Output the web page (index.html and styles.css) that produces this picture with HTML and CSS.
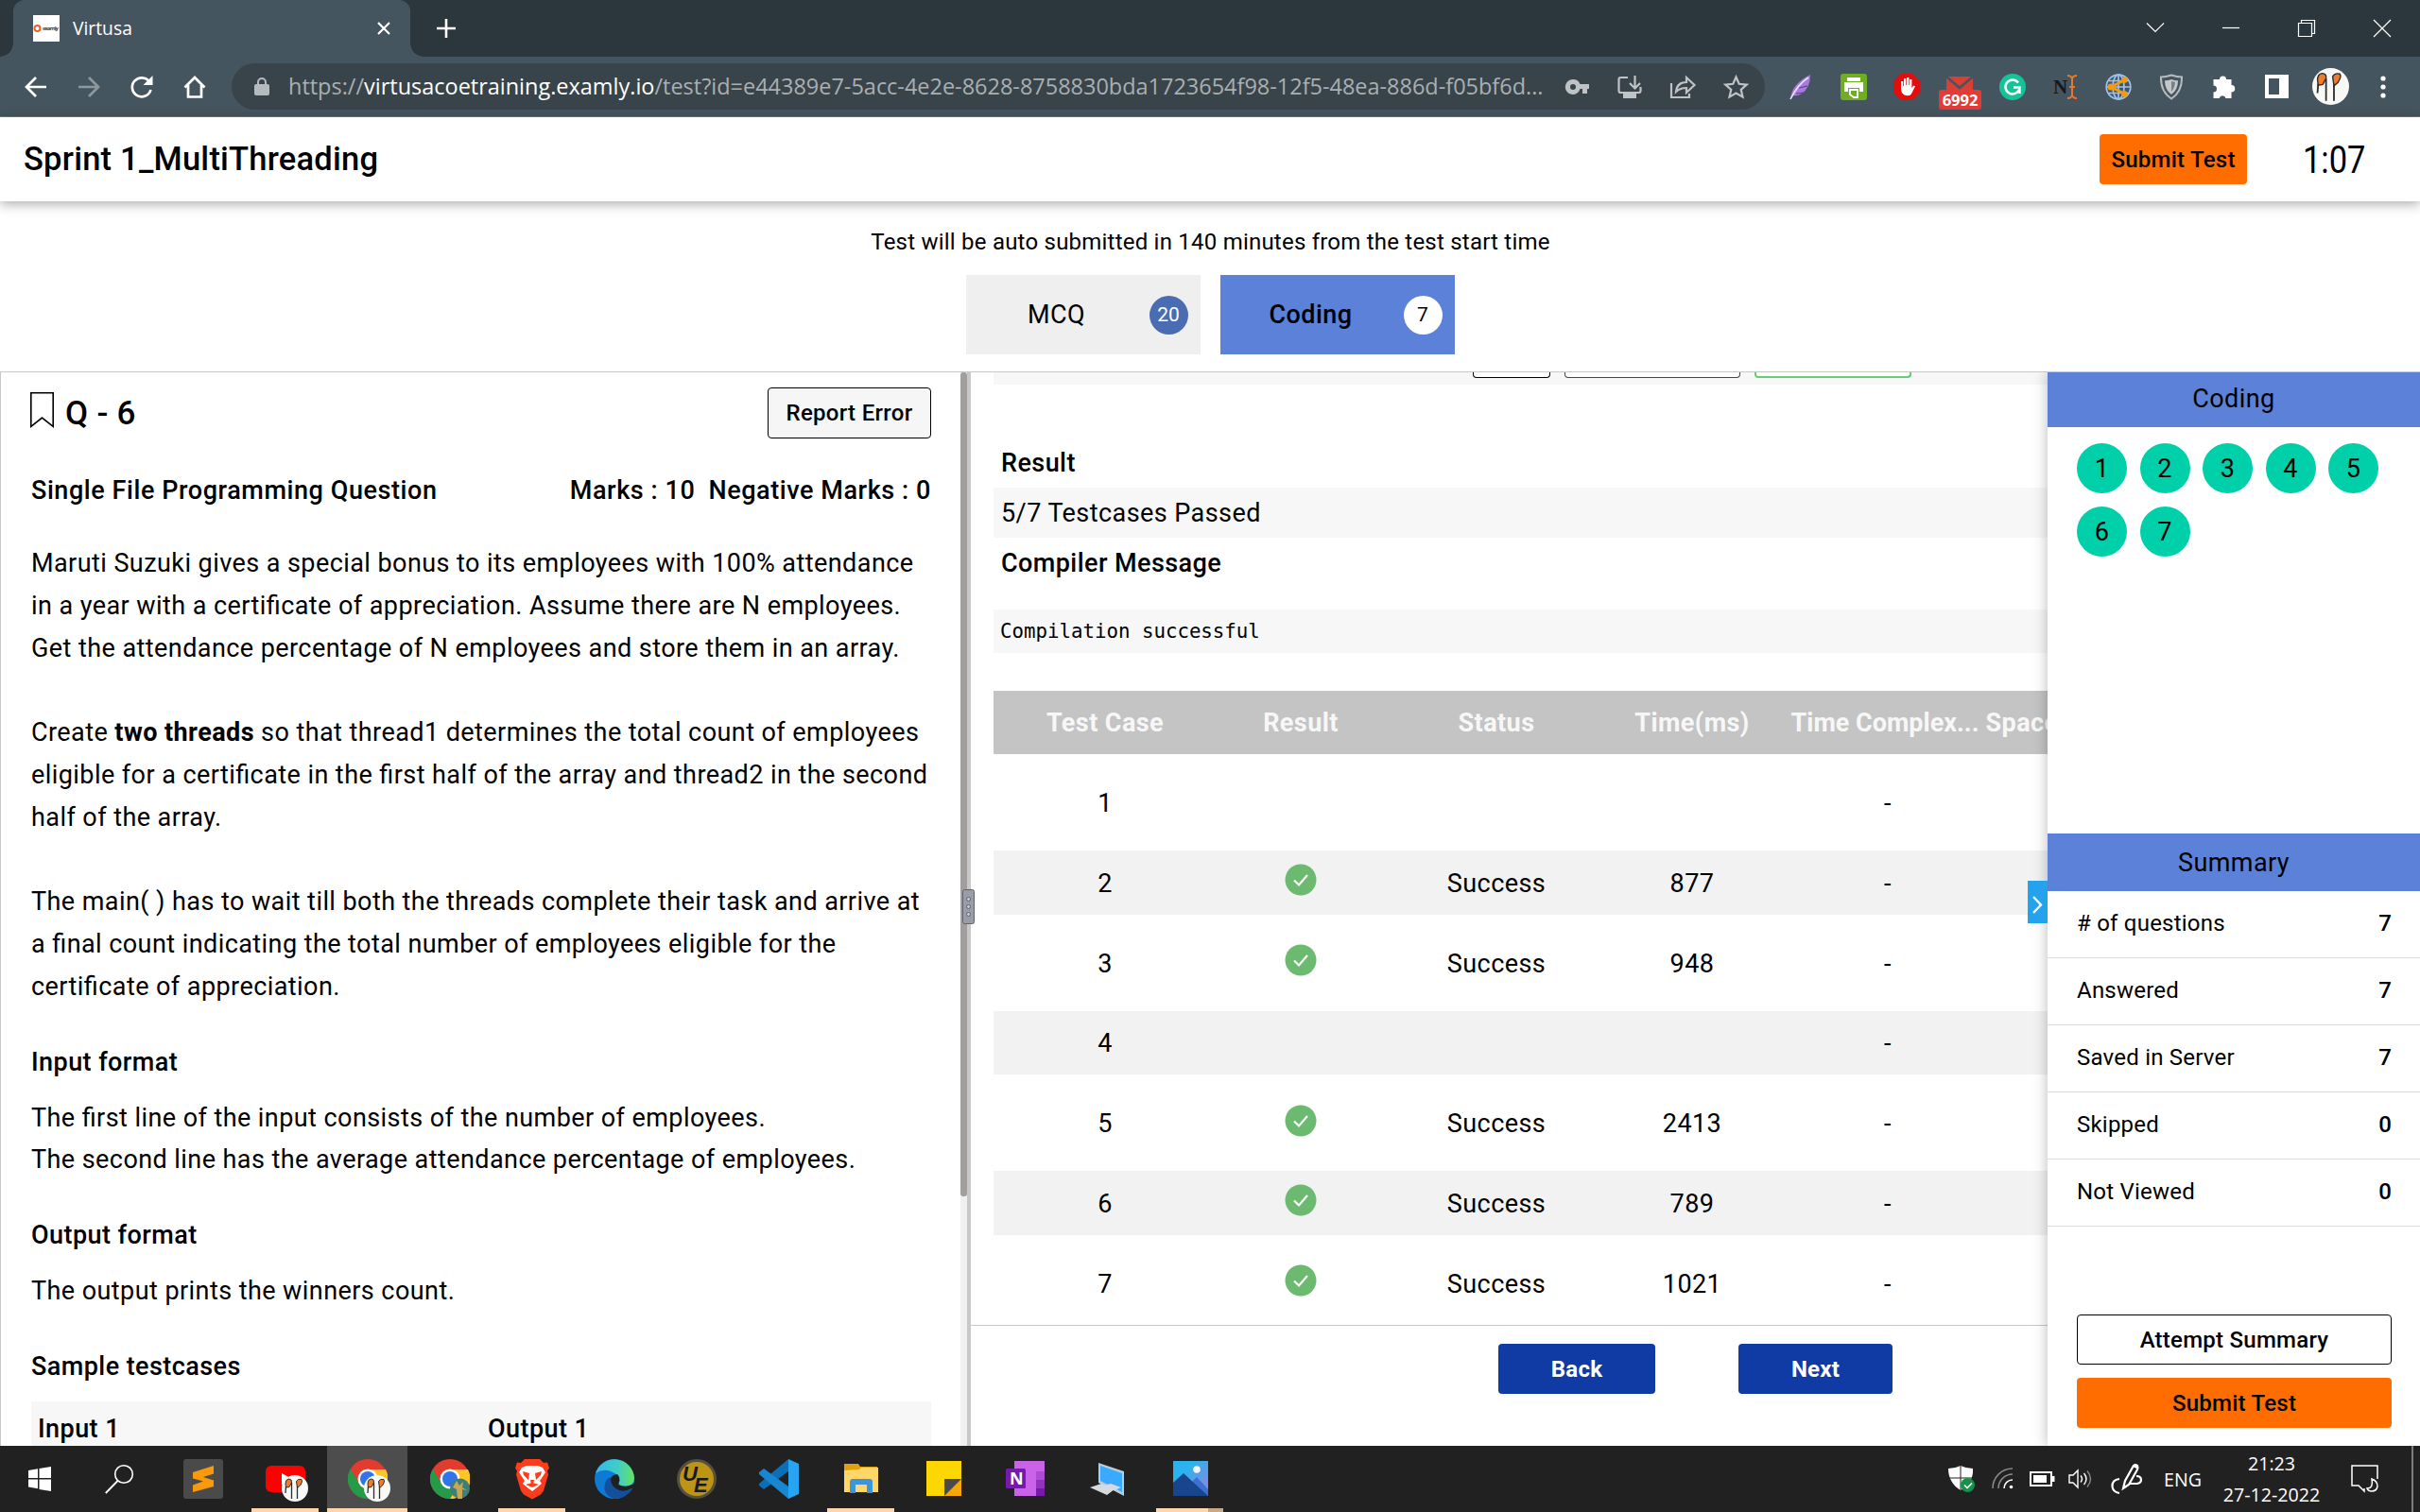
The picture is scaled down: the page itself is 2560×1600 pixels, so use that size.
FILE: index.html
```html
<!DOCTYPE html>
<html lang="en">
<head>
<meta charset="utf-8">
<title>Virtusa</title>
<link rel="stylesheet" href="styles.css">
</head>
<body>
<svg class="defs" width="0" height="0" aria-hidden="true">
  <symbol id="check" viewBox="0 0 34 34"><circle cx="17" cy="17" r="16.5" fill="#6bba70"/><path d="M10 17.5l5 5 9-10.5" fill="none" stroke="#fff" stroke-width="2.2"/></symbol>
  <symbol id="chrome" viewBox="0 0 42 42">
    <circle cx="21" cy="21" r="21" fill="#e33b2e"/>
    <path d="M21 11H40A21 21 0 0 1 21 42L30 26Z" fill="#fcc528"/>
    <path d="M2.8 10.5A21 21 0 0 0 21 42L30 26 12 26Z" fill="#259a48"/>
    <circle cx="21" cy="21" r="10.5" fill="#fff"/><circle cx="21" cy="21" r="8" fill="#2f74e8"/>
  </symbol>
  <symbol id="face" viewBox="0 0 28 28">
    <circle cx="14" cy="14" r="14" fill="#f8f8f6"/>
    <path d="M4 9Q4 4.500 7.500 4Q11 4 10.500 8L8 12.500 4.500 13ZM15.500 6.500Q17 3.500 21 4.500Q22.500 6.500 19.500 11L16.500 13.500Z" fill="#ee7c28" stroke="#2c2c2c" stroke-width="1"/>
    <path d="M4.500 12L4 19M10.500 8l0 17M16.500 12l0 13" fill="none" stroke="#2c2c2c" stroke-width="1.300"/>
  </symbol>
</svg>

<div class="screen">
  <div class="tabstrip">
    <div class="tab">
      <svg class="favicon" viewBox="0 0 28 28"><rect width="28" height="28" fill="#fff"/><circle cx="4.500" cy="14" r="3" fill="none" stroke="#e8622a" stroke-width="2"/><text x="10" y="16" font-size="6" font-weight="700" fill="#444" textLength="17">examly</text></svg>
      <span class="tab-title">Virtusa</span>
      <svg class="tab-close" viewBox="0 0 16 16"><path d="M2 2l12 12M14 2L2 14"/></svg>
    </div>
    <svg class="new-tab" viewBox="0 0 22 22"><path d="M11 1v20M1 11h20"/></svg>
    <div class="win-controls">
      <span><svg width="18" height="18" viewBox="0 0 18 18"><path d="M0 3.500l9 9 9-9"/></svg></span>
      <span><svg width="18" height="18" viewBox="0 0 18 18"><path d="M0 8.500h18"/></svg></span>
      <span><svg width="18" height="18" viewBox="0 0 18 18"><path d="M.5 3.500h14v14H.5zM3.500 3V.5h14v14h-3"/></svg></span>
      <span><svg width="18" height="18" viewBox="0 0 18 18"><path d="M0 0l18 18M18 0L0 18"/></svg></span>
    </div>
  </div>

  <div class="toolbar">
    <div class="nav">
      <span><svg width="24" height="24" viewBox="0 0 24 24"><path d="M23 12H3M12 2L2 12l10 10"/></svg></span>
      <span class="dim"><svg width="24" height="24" viewBox="0 0 24 24"><path d="M1 12h20M12 2l10 10-10 10"/></svg></span>
      <span><svg width="26" height="26" viewBox="0 0 26 26"><path d="M21 7.500A10 10 0 1 0 22.500 16"/><path d="M24.500 1v10h-10z" fill="#fff" stroke="none"/></svg></span>
      <span><svg width="24" height="24" viewBox="0 0 24 24"><path d="M1.500 12.500L12 2l10.500 10.500M5 10v12.500h14V10"/></svg></span>
    </div>
    <div class="omnibox">
      <svg class="lock" viewBox="0 0 16 20"><rect x="0" y="7" width="16" height="12" rx="2" fill="#b4babd"/><path d="M4 8V5a4 4 0 0 1 8 0v3" fill="none" stroke="#b4babd" stroke-width="2"/></svg>
      <span class="url">https://<b>virtusacoetraining.examly.io</b>/test?id=e44389e7-5acc-4e2e-8628-8758830bda1723654f98-12f5-48ea-886d-f05bf6d...</span>
      <div class="omni-icons">
        <span><svg class="key" width="25" height="16" viewBox="0 0 25 16"><path fill="#bfc3c5" stroke="none" fill-rule="evenodd" d="M8 0a8 8 0 0 1 7.500 5H25v5h-2v5h-5v-5h-2.500A8 8 0 1 1 8 0zm0 5a3 3 0 1 0 0 6 3 3 0 0 0 0-6z"/></svg></span>
        <span><svg width="26" height="26" viewBox="0 0 26 26"><path d="M11 3H3.500Q1.500 3 1.500 5v12q0 2 2 2h19q2 0 2-2v-4M18.500 1v13M13 9l5.500 5.500L24 9"/><path d="M6 20h14v5H6z" fill="#bfc3c5" stroke="none"/></svg></span>
        <span><svg width="28" height="26" viewBox="0 0 28 26"><path d="M2 9v15h19v-4M7 18q1-10 11-10V3l8.500 8-8.500 8v-5q-7 0-11 4z"/></svg></span>
        <span><svg width="27" height="26" viewBox="0 0 27 26"><path d="M13.500 2.500l3.200 7.300 8 .8-6 5.200 1.800 7.800-7-4.100-7 4.100 1.800-7.800-6-5.200 8-.8z"/></svg></span>
      </div>
    </div>
    <div class="extensions">
      <span><svg width="26" height="30" viewBox="0 0 26 30"><path d="M2 28Q3 12 23 2q0 14-9 20-5 3-9 2z" fill="#a67bdd"/><path d="M2 28Q10 12 21 5" fill="none" stroke="#efe2ff" stroke-width="1.500"/><path d="M8 22l8-1M11 16l9-2" stroke="#5e379b" stroke-width="1"/></svg></span>
      <span><svg width="28" height="28" viewBox="0 0 28 28"><rect width="28" height="28" rx="3" fill="#6fae22"/><path d="M7 4h14v4H7zM4 9h20v10h-4v-4H8v4H4z" fill="#fff"/><path d="M10 17h8v8h-4l-4-3z" fill="#6fae22" stroke="#fff" stroke-width="1.800"/></svg></span>
      <span><svg width="28" height="28" viewBox="0 0 28 28"><path d="M8 0h12l8 8v12l-8 8H8l-8-8V8z" fill="#e40d0d"/><path d="M8 15V8h2.200v5h.8V5h2.300v7h.8V4h2.300v8h.8V6h2.200v9l2-2.500 1.600.8-4 8q-1 2-4 2-7 0-7-8z" fill="#fff"/></svg></span>
      <span class="mail"><svg width="28" height="28" viewBox="0 0 28 28"><path d="M0 3h28v22H0z" fill="#d93f35"/><path d="M0 3l14 12L28 3" fill="none" stroke="#45555f" stroke-width="2.500"/></svg><em>6992</em></span>
      <span><svg width="28" height="28" viewBox="0 0 28 28"><circle cx="14" cy="14" r="14" fill="#15c39a"/><path d="M20 9.500A7.500 7.500 0 1 0 21.500 14.500H15M21.500 14v7" fill="none" stroke="#fff" stroke-width="2.400"/></svg></span>
      <span><svg width="26" height="28" viewBox="0 0 26 28"><text x="0" y="20.500" font-family="Liberation Serif, serif" font-size="21" font-weight="700" fill="#11181c">N</text><path d="M15 2q4 0 5 3 1-3 5-3M20 4v20M15 26q4 0 5-3 1 3 5 3M17 14h6" fill="none" stroke="#e8772a" stroke-width="2"/></svg></span>
      <span><svg width="28" height="28" viewBox="0 0 28 28"><g fill="none" stroke="#9dc2f0" stroke-width="1.700"><circle cx="14" cy="14" r="12.800"/><ellipse cx="14" cy="14" rx="6" ry="12.800"/><path d="M1 14h26M14 1v26M3.500 7.500h21M3.500 20.500h21"/></g><path d="M20 7L6 14l14 7" fill="none" stroke="#f59a0c" stroke-width="3"/><circle cx="20.500" cy="6.500" r="3.200" fill="#f59a0c"/><circle cx="6" cy="14" r="3.600" fill="#f59a0c"/><circle cx="20.500" cy="21.500" r="3.200" fill="#f59a0c"/></svg></span>
      <span><svg width="26" height="28" viewBox="0 0 26 28"><path d="M13 1.500q6 2 11 2Q24.500 19 13 26.500 1.500 19 2 3.500q5 0 11-2z" fill="none" stroke="#b9bcbe" stroke-width="2"/><path d="M13 6q3.500 1.200 7 1.200Q20 17 13 22 6 17 6 7.200 9.500 7.200 13 6z" fill="#c4c6c8"/><path d="M13 8v11q3.500-4 4-10z" fill="#75828a"/></svg></span>
      <span><svg width="26" height="26" viewBox="0 0 26 26"><path d="M8 5a3.500 3.500 0 0 1 7 0h5.500v6a3.500 3.500 0 0 1 0 7.500V25h-6a3.500 3.500 0 0 0-6.800 0H1.500v-6.500a3.500 3.500 0 0 0 0-7V5z" fill="#fff"/></svg></span>
      <span><svg width="26" height="26" viewBox="0 0 26 26"><path d="M0 0h25v25H0zM4 4v17h11V4z" fill="#fff" fill-rule="evenodd"/></svg></span>
      <span><svg width="39" height="39" viewBox="0 0 39 39"><use href="#face" width="39" height="39"/></svg></span>
      <span><svg width="6" height="24" viewBox="0 0 6 24"><circle cx="3" cy="3" r="2.600" fill="#fff"/><circle cx="3" cy="12" r="2.600" fill="#fff"/><circle cx="3" cy="21" r="2.600" fill="#fff"/></svg></span>
    </div>
  </div>

  <header class="exam-header">
    <h1>Sprint 1_MultiThreading</h1>
    <button class="btn orange">Submit Test</button>
    <span class="timer">1:07</span>
  </header>

  <section class="sections">
    <p>Test will be auto submitted in 140 minutes from the test start time</p>
    <div class="section-tabs">
      <div class="section-tab"><span>MCQ</span><i>20</i></div>
      <div class="section-tab active"><span>Coding</span><i>7</i></div>
    </div>
  </section>

  <main class="exam">
    <section class="question">
      <div class="question-scroll">
        <div class="q-head">
          <svg class="bookmark" viewBox="0 0 25 38"><path d="M.8.8h23.400v35.500L12.500 27 .8 36.300z"/></svg>
          <h2>Q - 6</h2>
          <button class="report">Report Error</button>
        </div>
        <div class="q-meta"><span>Single File Programming Question</span><span>Marks : 10</span><span>Negative Marks : 0</span></div>
        <div class="q-body">
          <p>Maruti Suzuki gives a special bonus to its employees with 100% attendance<br>in a year with a certificate of appreciation. Assume there are N employees.<br>Get the attendance percentage of N employees and store them in an array.</p>
          <p>Create <b>two threads</b> so that thread1 determines the total count of employees<br>eligible for a certificate in the first half of the array and thread2 in the second<br>half of the array.</p>
          <p>The main( ) has to wait till both the threads complete their task and arrive at<br>a final count indicating the total number of employees eligible for the<br>certificate of appreciation.</p>
        </div>
        <h3>Input format</h3>
        <p>The first line of the input consists of the number of employees.<br>The second line has the average attendance percentage of employees.</p>
        <h3>Output format</h3>
        <p>The output prints the winners count.</p>
        <h3>Sample testcases</h3>
        <div class="sample"><span>Input 1</span><span>Output 1</span></div>
      </div>
      <div class="scroll-track"><div class="scroll-thumb"></div></div>
    </section>
    <div class="splitter"><svg class="grip" viewBox="0 0 13 37"><rect x=".5" y=".5" width="12" height="36" rx="2" fill="#9a9da6" stroke="#5c6370"/><g fill="#c9ccd3" stroke="#5c6370" stroke-width="1"><circle cx="6.500" cy="10.500" r="2"/><circle cx="6.500" cy="18.500" r="2"/><circle cx="6.500" cy="26.500" r="2"/></g></svg></div>

    <section class="results">
      <div class="results-scroll">
        <div class="actions"><span></span><span></span><span></span></div>
        <h4>Result</h4>
        <div class="value">5/7 Testcases Passed</div>
        <h4>Compiler Message</h4>
        <pre>Compilation successful</pre>
        <div class="grid">
          <div class="row head"><span>Test Case</span><span>Result</span><span>Status</span><span>Time(ms)</span><span class="tight">Time Complex...</span><span class="clip">Space</span></div>
          <div class="row"><span>1</span><span></span><span></span><span></span><span>-</span></div>
          <div class="row"><span>2</span><span><svg><use href="#check"/></svg></span><span>Success</span><span>877</span><span>-</span></div>
          <div class="row"><span>3</span><span><svg><use href="#check"/></svg></span><span>Success</span><span>948</span><span>-</span></div>
          <div class="row"><span>4</span><span></span><span></span><span></span><span>-</span></div>
          <div class="row"><span>5</span><span><svg><use href="#check"/></svg></span><span>Success</span><span>2413</span><span>-</span></div>
          <div class="row"><span>6</span><span><svg><use href="#check"/></svg></span><span>Success</span><span>789</span><span>-</span></div>
          <div class="row"><span>7</span><span><svg><use href="#check"/></svg></span><span>Success</span><span>1021</span><span>-</span></div>
        </div>
      </div>
      <div class="pager"><button class="btn blue">Back</button><button class="btn blue next">Next</button></div>
    </section>

    <aside class="side">
      <svg class="collapse" viewBox="0 0 21 45"><path d="M0 0h21v45H0z" fill="#24a2ec"/><path d="M6 17l8 8.500L6 34" fill="none" stroke="#fff" stroke-width="2.400"/></svg>
      <h5>Coding</h5>
      <div class="numbers"><i>1</i><i>2</i><i>3</i><i>4</i><i>5</i><i>6</i><i>7</i></div>
      <h5 class="summary-head">Summary</h5>
      <dl>
        <div><dt># of questions</dt><dd>7</dd></div>
        <div><dt>Answered</dt><dd>7</dd></div>
        <div><dt>Saved in Server</dt><dd>7</dd></div>
        <div><dt>Skipped</dt><dd>0</dd></div>
        <div><dt>Not Viewed</dt><dd>0</dd></div>
      </dl>
      <div class="side-actions"><button class="btn outline">Attempt Summary</button><button class="btn orange">Submit Test</button></div>
    </aside>
  </main>

  <footer class="taskbar">
    <div class="task start"><svg width="24" height="26" viewBox="0 0 24 26"><path d="M0 4l10-1.700V12H0zM11.500 2L24 0v12H11.500zM0 13.500h10v9.700L0 21.500zM11.500 13.500H24V26l-12.500-2z" fill="#fff"/></svg></div>
    <div class="task search"><svg width="30" height="31" viewBox="0 0 30 31"><circle cx="20" cy="10" r="9.300" fill="none" stroke="#fff" stroke-width="1.600"/><path d="M13.500 17L.8 30" stroke="#fff" stroke-width="1.800"/></svg></div>
    <div class="task"><svg viewBox="0 0 42 42"><rect width="42" height="42" rx="3" fill="#4a4a4a"/><path d="M10 14l22-7v8.500L21 19l11 3.500v6.500L10 35v-7.500l11-4-11-3z" fill="#f99a0e"/></svg></div>
    <div class="task open"><svg viewBox="0 0 42 42"><rect y="7" width="42" height="28" rx="6" fill="#f00"/><path d="M17 15l11 6-11 6z" fill="#fff"/><use href="#face" x="17" y="17" width="28" height="28"/></svg></div>
    <div class="task active"><svg viewBox="0 0 42 42"><use href="#chrome" width="42" height="42"/><use href="#face" x="17" y="17" width="28" height="28"/></svg></div>
    <div class="task"><svg viewBox="0 0 42 42"><use href="#chrome" width="42" height="42"/><circle cx="31.500" cy="31" r="10.500" fill="#3d7f78"/><path d="M28 23l3 5 4-4-1 6 5 3-5-1v10h-5l-1-10-4-2z" fill="#c9a653"/></svg></div>
    <div class="task open"><svg viewBox="0 0 42 42"><path d="M13 0h16l4 4 4-.5 2 6-2 3 1 4-5 17-3 4-9 5-9-5-3-4-5-17 1-4-2-3 2-6 4 .5z" fill="#fb3d1c"/><path d="M15 7h12l5 2 3 5-6 9 2 3-6 5-4 3-4-3-6-5 2-3-6-9 3-5z" fill="#fff"/><path d="M11 13l7 2-1 7-5-5zM31 13l-7 2 1 7 5-5zM19 22h4l-1 5h-2zM14 27l7-2 7 2-7 3z" fill="#fb3d1c"/></svg></div>
    <div class="task"><svg viewBox="0 0 42 42"><defs><linearGradient id="e1" x1="0" x2="1"><stop offset="0" stop-color="#35b6f0"/><stop offset=".6" stop-color="#3fd0c0"/><stop offset="1" stop-color="#67e35a"/></linearGradient></defs><circle cx="21" cy="21" r="21" fill="#0e7ad3"/><path d="M1 15A21 21 0 0 1 42 20q0 8-9 8.500-7 0-7.500-3Q28 20 23 16 11 8 1 15z" fill="url(#e1)"/><path d="M17 19q0 11 10 14 7 2 14-3Q34 42 21 42 8 38 11 26q1-5 6-7z" fill="#12509c"/><path d="M24 16q-7 1-7 6 1 8 9 11 7 2 13-2l3-1v-4q-7 4-13 2.500-5-1-3.500-3Q28 20 24 16z" fill="#202020"/></svg></div>
    <div class="task"><svg viewBox="0 0 42 42"><circle cx="21" cy="21" r="19.500" fill="#bd9413" stroke="#55503f" stroke-width="3"/><text x="6" y="23" font-family="Liberation Sans, sans-serif" font-size="22" font-weight="700" font-style="italic" fill="#191919">U</text><text x="18" y="35" font-family="Liberation Sans, sans-serif" font-size="22" font-weight="700" font-style="italic" fill="#191919">E</text></svg></div>
    <div class="task"><svg viewBox="0 0 42 42"><path d="M31 0v13L5 32l-5-4v-2z" fill="#0b6fb5"/><path d="M31 42V29L5 10l-5 4v2z" fill="#1587d3"/><path d="M31 0l11 5v32l-11 5z" fill="#27a5f3"/></svg></div>
    <div class="task open"><svg viewBox="0 0 42 42"><path d="M3 5h15l2 3h18v8H3z" fill="#e2a00f"/><path d="M3 12l16-1 2-2h18v26H3z" fill="#ffd768"/><path d="M9 36V24q0-3 3-3h18q3 0 3 3v12h-6v-9H15v9z" fill="#3b94dc"/></svg></div>
    <div class="task"><svg viewBox="0 0 42 42"><path d="M3 2h37v37H3z" fill="#fdd703"/><path d="M22 21h18v18H22z" fill="#f5a808"/><path d="M22 21h18L22 39z" fill="#4a4a4a"/></svg></div>
    <div class="task"><svg viewBox="0 0 42 42"><path d="M9 2h32v37H9z" fill="#ca63e8"/><path d="M32 13h9v9h-9z" fill="#ae4bd5"/><path d="M32 22h9v9h-9z" fill="#9332bf"/><path d="M32 31h9v8h-9z" fill="#7719aa"/><rect y="10" width="21" height="21" rx="1.500" fill="#7719aa"/><text x="4" y="27" font-family="Open Sans, sans-serif" font-size="18" font-weight="700" fill="#fff">N</text></svg></div>
    <div class="task"><svg viewBox="0 0 42 42"><path d="M11 4l27 9v26L11 25z" fill="#b9ccd9"/><path d="M13 7l23 8v20L13 23z" fill="#39aaff"/><path d="M2 30l12-4 14 6-8 6zM16 28l8-2 11 4-7 3z" fill="#d4dadd"/></svg></div>
    <div class="task photos"><svg viewBox="0 0 42 42"><defs><linearGradient id="sky" x1="0" x2="1" y2="1"><stop offset=".3" stop-color="#2bb3ef"/><stop offset="1" stop-color="#9a80dd"/></linearGradient></defs><path d="M3 2h37v37H3z" fill="url(#sky)"/><path d="M17 30l11-11 12 13v7H17z" fill="#3e6fd2"/><path d="M3 25l11-10 26 24H3z" fill="#17468c"/><circle cx="28" cy="11" r="3.800" fill="#f5f2f0"/></svg></div>

    <div class="tray">
      <svg class="t-shield" viewBox="0 0 28 28"><path d="M13 0q6 3 13 3Q27 18 13 26 0 18 0 3q7 0 13-3z" fill="#fff"/><path d="M13 0v26M0 13h26" stroke="#202020"/><circle cx="20.500" cy="20.500" r="7.500" fill="#16914a"/><path d="M17 20.500l3 3 5-5" fill="none" stroke="#fff" stroke-width="1.600"/></svg>
      <svg class="t-wifi" viewBox="0 0 24 24"><g fill="none" stroke-width="1.500"><path d="M1 22A21 21 0 0 1 22 1M7 22A15 15 0 0 1 22 7" stroke="#8a8a8a"/><path d="M13 22a9 9 0 0 1 9-9" stroke="#fff"/></g><circle cx="20.500" cy="20.500" r="1.800" fill="#fff"/></svg>
      <svg class="t-battery" viewBox="0 0 27 16"><path d="M1 1h22v14H1z" fill="none" stroke="#fff" stroke-width="2"/><path d="M4 4h14v8H4zM24 5h2.500v6H24z" fill="#fff"/></svg>
      <svg class="t-sound" viewBox="0 0 27 22"><g fill="none" stroke="#fff" stroke-width="1.400"><path d="M1 7h4l5-5v18l-5-5H1zM13 7.500q3 3.500 0 7M16.500 5q5 6 0 12"/><path d="M20 2.500q7 8.500 0 17" stroke="#8a8a8a"/></g></svg>
      <svg class="t-pen" viewBox="0 0 34 34"><g fill="none" stroke="#fff" stroke-width="2.200"><path d="M13 27l2-8L24 3q2-2 4 0 1 2 0 4L19 23zM24 3l3.500 2M9 17q-8 1-7.500 8Q2 31 9 32M20 22h8q4-1 4-4 0-4-5-4"/></g></svg>
      <span class="lang">ENG</span>
      <div class="clock"><span>21:23</span><span>27-12-2022</span></div>
      <svg class="t-note" viewBox="0 0 30 30"><g fill="none" stroke="#fff" stroke-width="1.500"><path d="M28 15V1H1v21h7l6 6v-3"/><path d="M22 15q6 2 6 8-1 5-6 5-4 0-5-3 7 0 5-10z"/></g></svg>
      <i class="peek"></i>
    </div>
  </footer>
</div>
</body>
</html>
```
FILE: styles.css
```css
* { box-sizing: border-box; }
body { margin: 0; }
.defs { display: block; position: absolute; }
h1, h2, h3, h4, h5, p, pre, dl, dd { margin: 0; }
button { font: inherit; padding: 0; letter-spacing: inherit; color: inherit; }
i { font-style: normal; }
svg { display: block; flex: none; overflow: visible; }

.screen {
  width: 2560px; height: 1600px; overflow: hidden;
  display: flex; flex-direction: column;
  background: #fff; color: #000;
  font: 400 27px/32px Roboto, sans-serif;
  letter-spacing: .43px;
  font-feature-settings: "liga" 1;
}

/* browser chrome */
.tabstrip { height: 60px; flex: none; display: flex; align-items: center; background: #2c373d; padding-left: 14px; font-family: "Open Sans", sans-serif; letter-spacing: 0; }
.tab { position: relative; width: 420px; height: 60px; background: #45555f; border-radius: 12px 12px 0 0; display: flex; align-items: center; padding: 0 20px 0 21px; }
.tab::before, .tab::after { content: ""; position: absolute; bottom: 0; width: 14px; height: 14px; }
.tab::before { left: -14px; background: radial-gradient(circle at 0 0, transparent 13.5px, #45555f 14px); }
.tab::after { right: -14px; background: radial-gradient(circle at 100% 0, transparent 13.5px, #45555f 14px); }
.favicon { width: 28px; height: 28px; }
.tab-title { margin-left: 14px; font-size: 19.3px; color: #fff; flex: 1; }
.tab-close { width: 16px; height: 16px; fill: none; stroke: #fff; stroke-width: 2.2; }
.new-tab { width: 22px; height: 22px; margin-left: 27px; fill: none; stroke: #fff; stroke-width: 2.6; }
.win-controls { margin-left: auto; display: flex; height: 50px; }
.win-controls span { width: 80px; display: flex; align-items: center; justify-content: center; }
.win-controls svg { fill: none; stroke: #fff; stroke-width: 1.2; }
.toolbar { height: 64px; flex: none; display: flex; align-items: center; background: #45555f; border-bottom: 1px solid #6c7880; padding-left: 10px; font-family: "Open Sans", sans-serif; letter-spacing: 0; }
.nav, .omni-icons, .extensions { display: flex; }
.nav span, .omni-icons span, .extensions span { width: 56px; height: 40px; display: flex; align-items: center; justify-content: center; }
.nav svg { fill: none; stroke: #fff; stroke-width: 2.7; }
.nav .dim svg { stroke: #8d979c; }
.omnibox { width: 1622px; height: 49px; margin-left: 11px; border-radius: 25px; background: #39444a; display: flex; align-items: center; padding: 0 3px 0 24px; }
.lock { width: 16px; height: 20px; }
.url { margin-left: 20px; flex: 1; font-size: 23.48px; line-height: 32px; padding-bottom: 1px; white-space: nowrap; color: #a9afb2; }
.url b { font-weight: 400; color: #fff; }
.omni-icons svg { fill: none; stroke: #bfc3c5; stroke-width: 2.2; }
.extensions { margin-left: 10px; }
.mail { position: relative; }
.mail em { position: absolute; left: 6px; top: 23px; width: 45px; height: 21px; border-radius: 3px; background: #e53a35; color: #fff; font: 700 16.5px/21px "Open Sans", sans-serif; text-align: center; }

/* exam header */
.exam-header { position: relative; z-index: 2; height: 89px; flex: none; background: #fff; box-shadow: 0 3px 12px rgba(0,0,0,.33); display: flex; align-items: center; padding-left: 25px; }
.exam-header h1 { font: 500 34.5px/40px Roboto, sans-serif; letter-spacing: .22px; flex: 1; padding-bottom: 2px; }
.btn { height: 53px; border: 0; border-radius: 4px; font-size: 24px; font-weight: 500; letter-spacing: .25px; }
.orange { background: #ff6d00; }
.exam-header .btn { width: 156px; }
.timer { width: 124px; margin-left: 59px; font: 400 41px/40px Roboto, sans-serif; letter-spacing: 0; transform: scaleX(.84); transform-origin: left; }

.sections { height: 180px; flex: none; text-align: center; padding-top: 27px; }
.sections p { font-size: 24px; letter-spacing: .22px; padding-left: 1px; }
.section-tabs { display: flex; justify-content: center; gap: 21px; margin-top: 19px; }
.section-tab { width: 248px; height: 84px; background: #efefef; display: flex; align-items: center; }
.section-tab span { width: 192px; }
.section-tab i { width: 41px; height: 41px; margin-left: 2px; border-radius: 50%; background: #4a6cb3; color: #fff; font-size: 21px; line-height: 41px; letter-spacing: 0; }
.section-tab.active { background: #5c81d8; font-weight: 500; }
.section-tab.active i { background: #fff; color: #000; font-weight: 400; }

/* three-pane body */
.exam { height: 1137px; flex: none; display: flex; border-top: 1px solid #c8c8c8; }
.question { width: 1023px; display: flex; overflow: hidden; border-left: 1px solid #c8c8c8; }
.question-scroll { flex: 1; min-width: 0; padding: 16px 31px 0 32px; }
.q-head { display: flex; align-items: center; height: 54px; }
.bookmark { width: 25px; height: 38px; fill: none; stroke: #000; stroke-width: 1.6; margin: -6px 0 0 -1px; }
.q-head h2 { font: 500 35px/40px Roboto, sans-serif; letter-spacing: .3px; margin: 2px 0 0 12px; flex: 1; }
.report { width: 173px; height: 54px; border: 1px solid #000; border-radius: 4px; background: #f6f6f6; font-size: 24px; font-weight: 500; letter-spacing: .3px; }
.q-meta { display: flex; font-weight: 500; margin-top: 39px; letter-spacing: .57px; }
.q-meta span:first-child { flex: 1; }
.q-meta span:last-child { margin-left: 14px; }
.question p { line-height: 44.78px; white-space: nowrap; }
.q-body { margin-top: 39.2px; }
.q-body p + p { margin-top: 44.78px; }
.q-body b { font-weight: 700; }
.question h3 { font: 500 27px/32px Roboto, sans-serif; margin: 40.8px 0 21.1px; }
.sample { display: flex; background: #f7f7f7; padding: 13.5px 7px; height: 90px; font-weight: 500; }
.sample span:first-child { width: 476px; flex: none; }
.scroll-track { flex: none; width: 7px; background: #f0f0f0; }
.scroll-thumb { height: 872px; background: #a39e9e; border-radius: 3px; }
.splitter { position: relative; z-index: 1; width: 4px; background: #c8c8c8; }
.grip { position: absolute; left: -5px; top: 547px; width: 13px; height: 37px; }

.results { width: 1139px; display: flex; flex-direction: column; }
.results-scroll { height: 1008px; overflow: hidden; padding-left: 24px; }
.actions { height: 13px; background: #f7f7f7; display: flex; gap: 15px; padding-left: 507px; margin-bottom: 56px; }
.actions span { height: 6px; width: 82px; background: #fff; border: 1px solid #000; border-top: 0; border-radius: 0 0 4px 4px; }
.actions span:nth-child(2) { width: 186px; border-color: #444; }
.actions span:nth-child(3) { width: 166px; border: 2px solid #6ccb77; border-top: 0; }
.results h4 { font: 500 27px/55px Roboto, sans-serif; height: 53px; padding-left: 8px; }
.value { height: 53px; line-height: 55px; background: #f7f7f7; padding-left: 8px; }
.results pre { margin: 23px 0 40px; height: 46px; padding-left: 7px; background: #f7f7f7; font: 20.76px/46px "DejaVu Sans Mono", monospace; letter-spacing: 0; }
.row { display: flex; align-items: center; height: 67.5px; background: #f2f2f2; padding: 2px 0 0 14.5px; text-align: center; }
.row:nth-child(even) { height: 102px; background: #fff; }
.row span { width: 207px; flex: none; display: flex; justify-content: center; white-space: nowrap; }
.row svg { width: 34px; height: 34px; margin-top: -7px; }
.row.head { height: 67px; background: #c4c4c4; color: #f7f7f7; font-weight: 700; overflow: hidden; padding-top: 0; }
.row .tight { letter-spacing: 0; margin: 0 3px 0 -3px; }
.row .clip { justify-content: flex-start; }
.pager { flex: 1; border-top: 1px solid #c8c8c8; padding: 19px 0 0 558px; display: flex; }
.blue { width: 166px; background: #103ba5; color: #fff; font-weight: 700; }
.next { width: 163px; margin-left: 88px; }

.side { position: relative; width: 394px; background: #fff; box-shadow: 0 0 14px rgba(0,0,0,.28); clip-path: inset(0 0 0 -30px); display: flex; flex-direction: column; }
.collapse { position: absolute; left: -21px; top: 538px; width: 21px; height: 45px; }
.side h5 { height: 58px; font: 400 27px/56px Roboto, sans-serif; background: #5c81d8; text-align: center; }
.numbers { display: flex; flex-wrap: wrap; align-content: flex-start; gap: 13.5px; padding: 17px 20px 0 31px; height: 430px; }
.numbers i { width: 53px; height: 53px; border-radius: 50%; background: #00d0aa; text-align: center; line-height: 54px; }
.side .summary-head { height: 61px; line-height: 62px; }
dl div { height: 71px; border-bottom: 1px solid #dcdcdc; padding: 0 30px 2px 31px; display: flex; align-items: center; justify-content: space-between; font-size: 24px; letter-spacing: .22px; }
dd { font-weight: 500; }
.side-actions { margin-top: 93px; padding: 0 30px 0 31px; display: flex; flex-direction: column; gap: 14px; }
.outline { background: #fff; border: 1px solid #000; }

/* taskbar */
.taskbar { height: 70px; flex: none; display: flex; background: #212121; color: #fff; font-family: "Open Sans", sans-serif; letter-spacing: 0; }
.task { width: 87px; display: flex; align-items: center; justify-content: center; border-bottom: 4px solid transparent; padding-top: 4px; flex: none; }
.task > svg { width: 42px; height: 42px; }
.task.start { width: 84px; }
.task.start > svg { width: 24px; height: 26px; }
.task.search > svg { width: 30px; height: 31px; margin-left: -4px; }
.task.open { background: linear-gradient(#ffd5ad, #ffd5ad) center bottom / 71px 4px no-repeat border-box; }
.task.active { background: linear-gradient(#ffd5ad, #ffd5ad) center bottom / 85px 4px no-repeat border-box, linear-gradient(#4d4d4d, #4d4d4d) center / 85px 100% no-repeat border-box; }
.task.photos { background: linear-gradient(90deg, #ffd5ad 55px, #c9a888 55px) 8px bottom / 71px 4px no-repeat border-box; }
.tray { margin-left: auto; display: flex; align-items: center; width: 499px; }
.t-shield { width: 28px; height: 28px; }
.t-wifi { width: 24px; height: 24px; margin-left: 18px; }
.t-battery { width: 27px; height: 16px; margin-left: 16px; }
.t-sound { width: 27px; height: 22px; margin-left: 14px; }
.t-pen { width: 34px; height: 34px; margin-left: 18px; }
.lang { width: 40px; margin-left: 22px; font-size: 19.6px; padding-top: 2px; }
.clock { width: 110px; margin-left: 19px; display: flex; flex-direction: column; align-items: center; font-size: 19.7px; line-height: 33px; }
.t-note { width: 30px; height: 30px; margin-left: 29px; }
.peek { width: 2px; height: 70px; margin-left: 34px; background: #7d7d7d; }
```
